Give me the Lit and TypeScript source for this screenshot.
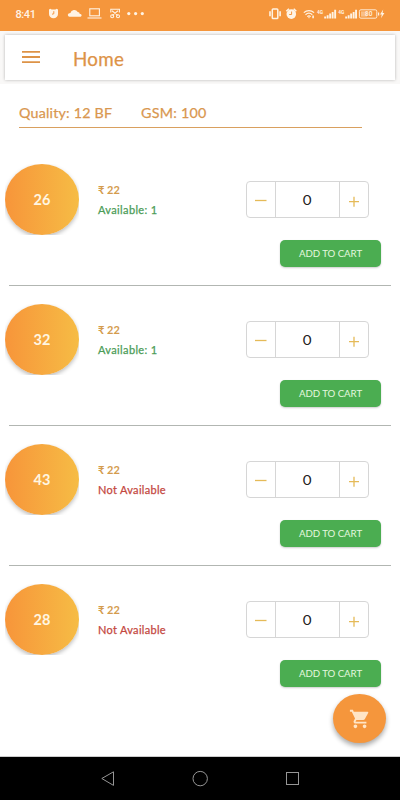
import { LitElement, html, css } from "lit";
import { customElement } from "lit/decorators.js";

@customElement("status-bar")
class StatusBar extends LitElement {
  static styles = css`
    :host { display: flex; height: 31px; background: #f5963c; color: #fff3e4; }
    svg { display: block; width: 400px; height: 30px; }
    .time { font: 500 11px Roboto, sans-serif; }
    .net { font: 700 4.8px Roboto, sans-serif; }
    .level { font: 500 6.5px Roboto, sans-serif; }
  `;
  render() {
    return html`<svg viewBox="0 0 400 30" fill="currentColor">
      <text class="time" x="15.5" y="17.6" textLength="20.5">8:41</text>
      <path d="M49 9.6l1.4-.9 1.2.7h3.8l1.2-.7 1.4.9v4.4a4.5 4.3 0 0 1-9 0z"/>
      <path d="M53.8 11.2v2.6l-1.8.4" stroke="#f5963c" fill="none"/>
      <path d="M69.5 16.7a1.9 1.9 0 0 1-1.7-1.6c0-1.4 1.4-2.2 2.6-2.2a4 4 0 0 1 7.3-1 2.3 2.3 0 0 1 2.1 2.1 1.4 1.4 0 0 1 .8 2.7z"/>
      <g fill="none" stroke="currentColor" stroke-width="1.1">
        <rect x="89.8" y="8.8" width="9.6" height="7"/>
        <path d="M87.5 18h14"/>
        <path d="M110.8 12.4V9.3h8.6v3.1M112 10.8l5.8 4.6M118 10.8l-5.8 4.6"/>
        <circle cx="112.2" cy="16.3" r="1.5"/><circle cx="118" cy="16.3" r="1.5"/>
      </g>
      <circle cx="128.8" cy="13.6" r="1.6"/><circle cx="135.6" cy="13.6" r="1.6"/><circle cx="142.3" cy="13.6" r="1.6"/>
      <rect x="272.3" y="9" width="5.5" height="9.6" rx=".8" fill="none" stroke="currentColor" stroke-width="1.5"/>
      <path d="M270 11.3v5M280.1 11.3v5" stroke="currentColor" stroke-width="1.6"/>
      <circle cx="291.3" cy="14.1" r="4.8"/>
      <path d="M286.3 11.2l2.6-2.5M296.3 11.2l-2.6-2.5" stroke="currentColor" stroke-width="1.5"/>
      <path d="M291.6 11.5v3h-2.4" stroke="#f5963c" fill="none"/>
      <path d="M303.8 12.6c3-2.7 7.3-2.7 10.3 0M305.5 14.7c2-1.8 4.8-1.8 6.8 0M307.3 16.6c1-.9 2.4-.9 3.4 0" fill="none" stroke="currentColor" stroke-width="1.2"/>
      <path d="M308 17.2h2l-1 1.2zM312.3 15.5h1.6v2.8h-1.6z"/>
      <text class="net" x="317" y="13.5">4G</text>
      <path d="M324.2 16.4h1.9v2h-1.9zM326.7 15.2h1.9v3.2h-1.9zM329.2 13.6h1.9v4.8h-1.9zM331.7 11.9h1.9v6.5h-1.9zM334.2 9.8h1.9v8.6h-1.9z"/>
      <text class="net" x="338.2" y="13.5">4G</text>
      <path d="M345.2 16.4h1.9v2h-1.9zM347.7 15.2h1.9v3.2h-1.9zM350.2 13.6h1.9v4.8h-1.9zM352.7 11.9h1.9v6.5h-1.9zM355.1 9.8h1.9v8.6h-1.9z"/>
      <rect x="359.4" y="9.8" width="17.4" height="8.4" rx="1.5" fill="none" stroke="currentColor" stroke-width=".9"/>
      <path d="M378 12.5h1.2v3H378z"/>
      <rect x="361" y="11.4" width="6" height="5.2" opacity=".45"/>
      <text class="level" x="365" y="16.4">80</text>
      <path d="M383.2 9.6l-3.2 4.9h1.8l-.8 3.8 3.4-5.2h-1.8z"/>
    </svg>`;
  }
}

@customElement("product-row")
class ProductRow extends LitElement {
  static properties = { size: { type: String }, available: { type: Boolean } };
  declare size: string;
  declare available: boolean;
  static styles = css`
    :host {
      display: grid; grid-template-columns: 74px 149px 1fr; height: 140px;
      box-sizing: border-box; padding: 18px 0 0 5px;
      font-family: Lato, "Noto Sans", sans-serif;
    }
    .clip { height: 71px; overflow: hidden; }
    .disc {
      height: 71px; border-radius: 50%; display: flex; align-items: center; justify-content: center;
      background: linear-gradient(90deg, #f7953a, #f6bc45); color: #fff6e2;
      font-weight: 700; font-size: 14.5px; letter-spacing: .2px; box-shadow: 0 2px 4px #0004;
    }
    .info { padding: 16px 0 0 19px; }
    .price, .stock { height: 20px; line-height: 20px; font-size: 11px; white-space: nowrap; }
    .price { color: #d49b4d; font-weight: 700; }
    .stock { color: #4b9c57; letter-spacing: .36px; line-height: 19px; -webkit-text-stroke: .25px currentColor; }
    .stock.none { color: #c4483f; letter-spacing: .3px; }
    .actions { padding: 17px 19px 0 19px; }
    .stepper {
      display: grid; grid-template-columns: 28px 1fr 28px; width: 123px; height: 37px;
      box-sizing: border-box; border: 1px solid #d6d6d6; border-radius: 4px; margin-left: -1px;
    }
    .stepper > * { display: flex; align-items: center; justify-content: center; }
    .count { border: solid #d6d6d6; border-width: 0 1px; color: #222; }
    .digit { font-size: 14px; transform: scaleX(1.08); }
    .step { fill: none; stroke: #e5ba58; stroke-width: 1.3; }
    .step svg { width: 28px; height: 35px; }
    .cart {
      width: 101px; height: 27px; margin: 22px 0 0 auto; border-radius: 5px; background: #4bad51;
      box-shadow: 0 1px 2px #0003; color: #e4f8df; font-size: 9.7px; letter-spacing: -.05px;
      text-align: center; line-height: 27px;
    }
  `;
  render() {
    return html`
      <div class="clip"><div class="disc">${this.size}</div></div>
      <div class="info">
        <div class="price">₹ 22</div>
        <div class="stock ${this.available ? "" : "none"}">${this.available ? "Available: 1" : "Not Available"}</div>
      </div>
      <div class="actions">
        <div class="stepper">
          <span class="step"><svg viewBox="0 0 28 35"><path d="M8 18.5h11.5"/></svg></span>
          <span class="count"><span class="digit">0</span></span>
          <span class="step"><svg viewBox="0 0 28 35"><path d="M9 19.7h10M14 14.7v10"/></svg></span>
        </div>
        <div class="cart">ADD TO CART</div>
      </div>`;
  }
}

@customElement("app-root")
class AppRoot extends LitElement {
  static styles = css`
    :host {
      display: flex; flex-direction: column; position: relative; width: 400px; height: 800px;
      overflow: hidden; background: #fff; font-family: Lato, "Noto Sans", sans-serif;
    }
    header { height: 53px; padding: 4px 5px 0; box-sizing: border-box; background: #f9f8f7; }
    .bar {
      height: 45px; background: #fff; box-shadow: 0 0 3px #0004; display: flex; align-items: center;
      padding-left: 17px; color: #dd9347;
    }
    .menu { width: 18px; height: 14px; fill: none; stroke: #dd9347; stroke-width: 1.8; margin-top: -2px; }
    .title { margin-left: 33px; font-size: 18.8px; letter-spacing: .3px; padding-top: 1px; -webkit-text-stroke: .25px currentColor; }
    .spec {
      display: flex; width: 343px; height: 44px; box-sizing: border-box; margin: 0 0 18px 19px;
      border-bottom: 1px solid #d9a05f; color: #d9974f; font-size: 14.3px; line-height: 18px; padding-top: 20px;
      white-space: nowrap; -webkit-text-stroke: .25px currentColor;
    }
    .quality { width: 122px; letter-spacing: .2px; }
    .gsm { letter-spacing: .25px; }
    .list { height: 610px; }
    .rule { height: 1px; margin: -1px 9px 0; background: #b2b6b2; }
    .fab {
      position: absolute; left: 333px; top: 694px; width: 53px; height: 49px; border-radius: 50%;
      background: #f5963c; box-shadow: 0 3px 5px #0005; display: flex; align-items: center; justify-content: center;
    }
    .fab svg { width: 22px; height: 22px; fill: #ffe5c6; }
    nav { height: 43px; background: #000; border-top: 1px solid #ccc; box-sizing: content-box; }
    nav svg { display: block; fill: none; stroke: #969696; stroke-width: 1; }
  `;
  render() {
    const items = [["26", true], ["32", true], ["43", false], ["28", false]] as const;
    return html`
      <status-bar></status-bar>
      <header><div class="bar">
        <svg class="menu" viewBox="0 0 18 14"><path d="M0 1.8h18M0 7h18M0 12.2h18"/></svg>
        <span class="title">Home</span>
      </div></header>
      <div class="spec"><span class="quality">Quality: 12 BF</span><span class="gsm">GSM: 100</span></div>
      <div class="list">
        ${items.map(([size, ok], i) => html`
          <product-row .size=${size} .available=${ok}></product-row>
          ${i < 3 ? html`<div class="rule"></div>` : ""}`)}
      </div>
      <nav><svg width="400" height="43" viewBox="0 0 400 43">
        <path d="M101.8 21.5L113.5 14.8v13.6z"/><circle cx="200.2" cy="21.6" r="7.2"/><rect x="286.5" y="15.5" width="12" height="12"/>
      </svg></nav>
      <div class="fab"><svg viewBox="0 0 24 24"><path d="M7 18c-1.1 0-1.99.9-1.99 2S5.9 22 7 22s2-.9 2-2-.9-2-2-2zM1 2v2h2l3.6 7.59-1.35 2.45c-.16.28-.25.61-.25.96 0 1.1.9 2 2 2h12v-2H7.42c-.14 0-.25-.11-.25-.25l.03-.12.9-1.63h7.45c.75 0 1.41-.41 1.75-1.03l3.58-6.49A1 1 0 0 0 20 4H5.21l-.94-2H1zm16 16c-1.1 0-1.99.9-1.99 2s.89 2 1.99 2 2-.9 2-2-.9-2-2-2z"/></svg></div>`;
  }
}
